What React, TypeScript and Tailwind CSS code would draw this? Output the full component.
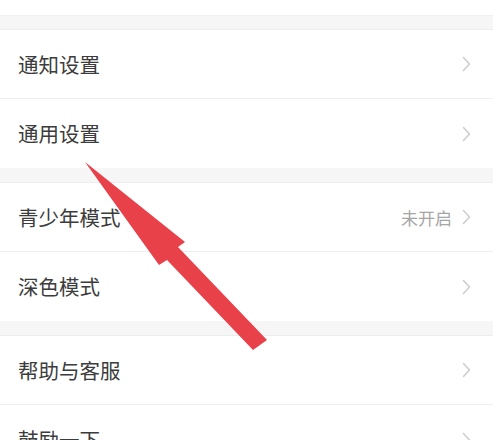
const Chevron = () => (
  <svg width="9" height="16" viewBox="0 0 9 16" fill="none" className="shrink-0">
    <path d="M1.5 1.5 L7.5 8 L1.5 14.5" stroke="#cccccc" strokeWidth="1.5" strokeLinecap="round" strokeLinejoin="round" />
  </svg>
);

type Item = { label: string; value?: string };

const Row = ({ item, last }: { item: Item; last: boolean }) => (
  <div
    className={`flex items-center h-[69px] pl-[18px] pr-[22px] bg-white ${
      last ? "" : "border-b border-[#eeeeee]"
    }`}
  >
    <span className="flex-1 text-[20.5px] leading-none text-[#3c3c3c]">{item.label}</span>
    {item.value && (
      <span className="mr-[10px] text-[17px] leading-none text-[#a6a6a6]">{item.value}</span>
    )}
    <Chevron />
  </div>
);

const groups: Item[][] = [
  [{ label: "通知设置" }, { label: "通用设置" }],
  [{ label: "青少年模式", value: "未开启" }, { label: "深色模式" }],
  [{ label: "帮助与客服" }, { label: "鼓励一下" }],
];

export default function App() {
  return (
    <div
      className="relative w-[493px] h-[440px] overflow-hidden bg-white"
      style={{ fontFamily: '"Noto Sans CJK SC", "Noto Sans", sans-serif' }}
    >
      <div className="h-[16px] bg-white border-b border-[#f0f0f0]" />
      {groups.map((g, gi) => (
        <div key={gi}>
          <div className={`${gi === 0 ? "h-[14px]" : "h-[15px]"} bg-[#f6f6f6] border-b border-[#ededed]`} />
          {g.map((item, i) => (
            <Row key={item.label} item={item} last={i === g.length - 1} />
          ))}
        </div>
      ))}

      {/* red annotation arrow */}
      <svg className="absolute left-0 top-0 pointer-events-none" width="493" height="440" viewBox="0 0 493 440">
        <polygon
          points="85,162 185,242 178,247 267,340 253,350 167,260 159,265"
          fill="#e8414a"
        />
      </svg>
    </div>
  );
}
